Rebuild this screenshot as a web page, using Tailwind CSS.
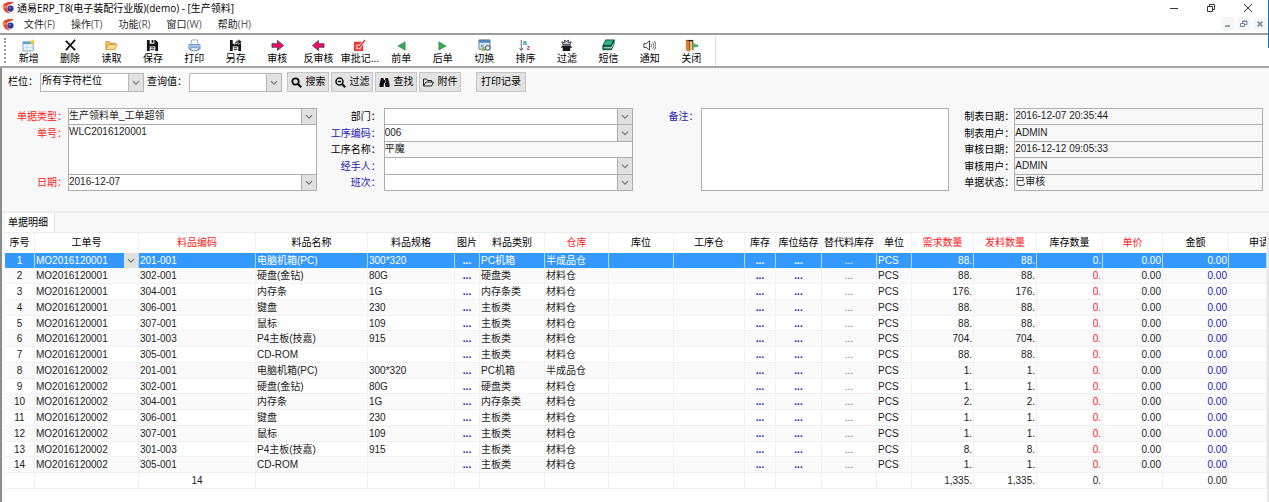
<!DOCTYPE html>
<html lang="zh-CN">
<head>
  <meta charset="UTF-8" />
  <meta name="viewport" content="width=device-width, initial-scale=1.0" />
  <title>通易ERP_T8</title>
  <script src="https://cdn.jsdelivr.net/npm/@tailwindcss/browser@4"></script>
</head>
<body class="bg-white min-h-screen overflow-hidden flex flex-col text-[10px] leading-[14px] text-[#1c1c1c] font-['Liberation_Sans','Noto_Sans_CJK_SC',sans-serif]">

  <!-- 公用图标 -->
  <svg class="hidden">
    <symbol id="chev" viewBox="0 0 16 16"><path d="M4.5 6.5 8 10l3.500-3.500" fill="none" stroke="#777" stroke-width="1.400" /></symbol>
    <symbol id="logo" viewBox="0 0 12 12">
      <path d="M1 5C1 2 4 .5 11 1 9.500 2.500 8 3 6.500 3.400 4.500 4 3.800 6 5 8.500 5.500 9.800 6.500 10.600 8 11.300 4 11.500 1 9 1 5Z" fill="#e8402a" />
      <path d="M0 5.500C1 4.500 3 4 4.500 4.200L3 7Z" fill="#f58b4c" />
      <circle cx="7.800" cy="7" r="2.900" fill="#33349a" />
      <circle cx="7.200" cy="6.300" r="1" fill="#7a7bd0" />
    </symbol>
  </svg>

  <!-- 标题栏 -->
  <header class="font-['Open_Sans','Noto_Sans_CJK_SC',sans-serif]">
    <div class="flex items-center h-[15px] pl-[2px] pr-4">
      <svg class="size-[13px] shrink-0"><use href="#logo" /></svg>
      <h1 class="ml-[2px] text-black">通易ERP_T8(电子装配行业版)(demo) - [生产领料]</h1>
      <div class="ml-auto flex items-center gap-[27px] text-[#333]">
        <button aria-label="最小化"><svg class="size-[10px]" viewBox="0 0 10 10" fill="none" stroke="currentColor"><path d="M1 5.500h8" /></svg></button>
        <button aria-label="还原"><svg class="size-[10px]" viewBox="0 0 10 10" fill="none" stroke="currentColor"><path d="M1.500 3.500h5v5h-5zM3.500 3V1.500h5v5H7" /></svg></button>
        <button aria-label="关闭"><svg class="size-[10px]" viewBox="0 0 10 10" fill="none" stroke="currentColor"><path d="M1 1l8 8M9 1L1 9" /></svg></button>
      </div>
    </div>
    <nav class="flex items-center h-[18px] pl-[2px] pr-[2px]">
      <svg class="size-[13px] shrink-0 mr-[9px]"><use href="#logo" /></svg>
      <div class="flex gap-4">
        <button>文件<span class="text-[#555]">(F)</span></button>
        <button>操作<span class="text-[#555]">(T)</span></button>
        <button>功能<span class="text-[#555]">(R)</span></button>
        <button>窗口<span class="text-[#555]">(W)</span></button>
        <button>帮助<span class="text-[#555]">(H)</span></button>
      </div>
      <div class="ml-auto flex gap-[2px] text-[#7386a0]">
        <button aria-label="最小化窗口" class="bg-[#f6f6f6] p-[3px]"><svg class="size-2" viewBox="0 0 8 8" fill="none" stroke="currentColor" stroke-width="1.500"><path d="M1 6h5" /></svg></button>
        <button aria-label="还原窗口" class="bg-[#f6f6f6] p-[3px]"><svg class="size-2" viewBox="0 0 8 8" fill="none" stroke="currentColor"><path d="M.5 3.500h4v3h-4zM2.500 3V1h4.500v3.500H5M2.500 1.500H7" /></svg></button>
        <button aria-label="关闭窗口" class="bg-[#f6f6f6] p-[3px]"><svg class="size-2" viewBox="0 0 8 8" fill="none" stroke="currentColor" stroke-width="1.700"><path d="M1.500 1.500l5 5M6.500 1.500l-5 5" /></svg></button>
      </div>
    </nav>
  </header>
  <div class="absolute right-0 top-0 w-px h-12 bg-[#1673c4]"></div>

  <!-- 工具栏 -->
  <div class="border-y-2 border-[#9c9c9c] border-b-[#a5a5a5] flex">
    <div class="flex flex-1 max-w-[716px] border-r border-[#ddd] pl-1 pr-[3px] h-[31px]">
      <div class="w-1 my-[3px] border-l-2 border-dotted border-[#999]"></div>
      <div id="toolbar" class="flex flex-1"></div>
    </div>
  </div>

  <main class="flex-1 flex flex-col border-l-2 border-[#8c8c8c] bg-[#f8f8f8]">

    <!-- 查询条件 -->
    <div class="flex items-center pl-[6px] pt-1 text-black">
      <label for="lanwei" class="w-8">栏位：</label>
      <div class="grid w-[104px] h-[19px] border border-[#b5b5b5] bg-white">
        <select id="lanwei" class="[grid-area:1/1] appearance-none min-w-0 pl-[1px] pr-4 pb-[2px] outline-none"><option>所有字符栏位</option></select>
        <svg class="[grid-area:1/1] justify-self-end h-full w-[15px] bg-[#e1e1e1] border-l border-[#b5b5b5] pointer-events-none"><use href="#chev" /></svg>
      </div>
      <label for="chaxun" class="ml-[3px] w-[42px]">查询值：</label>
      <div class="grid w-[93px] h-[19px] border border-[#b5b5b5] bg-white">
        <select id="chaxun" class="[grid-area:1/1] appearance-none min-w-0 pl-[1px] pr-4 outline-none"><option></option></select>
        <svg class="[grid-area:1/1] justify-self-end h-full w-[15px] bg-[#e1e1e1] border-l border-[#b5b5b5] pointer-events-none"><use href="#chev" /></svg>
      </div>
      <div class="flex gap-[2px] ml-[5px]">
        <button class="flex items-center justify-center gap-1 w-[42px] h-5 bg-[#e3e3e3] border border-[#c4c4c4]">
          <svg class="size-[11px]" viewBox="0 0 11 11" fill="none" stroke="#111" stroke-width="1.800"><circle cx="4.500" cy="4.500" r="3.200" /><path d="M7 7l3.200 3.200" stroke-width="2.200" /></svg>搜索</button>
        <button class="flex items-center justify-center gap-1 w-[42px] h-5 bg-[#e3e3e3] border border-[#c4c4c4]">
          <svg class="size-[11px]" viewBox="0 0 11 11" fill="none" stroke="#111" stroke-width="1.500"><circle cx="4.500" cy="4.500" r="3.500" /><path d="M7 7l3.200 3.200" stroke-width="2.200" /><path d="M2.800 4.500h3.400" /></svg>过滤</button>
        <button class="flex items-center justify-center gap-1 w-[42px] h-5 bg-[#e3e3e3] border border-[#c4c4c4]">
          <svg class="size-[11px]" viewBox="0 0 11 11" fill="#111"><path d="M2 1h2.500v1.200H5v4.300l-.5 3.500H.5V7zM9 1H6.500v1.200H6v4.300l.5 3.500h4V7zM4.500 3h2v3h-2z" /></svg>查找</button>
        <button class="flex items-center justify-center gap-1 w-[42px] h-5 bg-[#e3e3e3] border border-[#c4c4c4]">
          <svg class="size-[11px]" viewBox="0 0 11 11" fill="none" stroke="#222"><path d="M.5 9V2h3l1 1.500h4V5M.5 9l2.500-4h7.500L8.500 9z" stroke-linejoin="round" /></svg>附件</button>
      </div>
      <button class="ml-[15px] w-[50px] h-5 bg-[#e3e3e3] border border-[#c4c4c4]">打印记录</button>
    </div>

    <!-- 单据表头 -->
    <div class="grid grid-cols-[66px_1fr_67px_1fr_68px_1fr_65px_1fr] pt-4 pb-5 pr-[6px] text-black">
      <div class="grid grid-rows-[17px_17px_16px_17px_16px] justify-items-end items-center pr-[1px] text-[#ff2020]">
        <label for="leixing">单据类型：</label>
        <label for="danhao">单号：</label>
        <label for="riqi" class="row-start-5">日期：</label>
      </div>
      <div class="grid grid-rows-[16px_50px_16px] border-t border-[#adadad]" data-fields="left"></div>

      <div class="grid grid-rows-[17px_17px_16px_17px_16px] justify-items-end items-center pr-[3px]">
        <label for="bumen">部门：</label>
        <label for="gxbm" class="text-[#1c1cb4]">工序编码：</label>
        <label for="gxmc">工序名称：</label>
        <label for="jingshou" class="text-[#1c1cb4]">经手人：</label>
        <label for="banci" class="text-[#1c1cb4]">班次：</label>
      </div>
      <div class="grid grid-rows-[16px_17px_16px_17px_16px] border-t border-[#adadad]" data-fields="middle"></div>

      <div class="text-right pr-[2px] pt-[2px] text-[#1c1cb4]"><label for="beizhu">备注：</label></div>
      <textarea id="beizhu" class="resize-none border border-[#adadad] bg-white outline-none"></textarea>

      <div class="grid grid-rows-[17px_17px_16px_17px_16px] justify-items-end items-center">
        <label for="zbrq">制表日期：</label>
        <label for="zbyh">制表用户：</label>
        <label for="shrq">审核日期：</label>
        <label for="shyh">审核用户：</label>
        <label for="djzt">单据状态：</label>
      </div>
      <div class="grid grid-rows-[16px_17px_16px_17px_16px] border-t border-[#adadad]" data-fields="right"></div>
    </div>

    <!-- 明细 -->
    <div class="flex-1 flex flex-col pl-[3px] border-t-2 border-[#eeeeee]">
      <div class="flex border-b border-[#ececec]">
        <button class="h-[19px] pl-[3px] pr-[6px] bg-white border-r border-[#e4e4e4] text-black">单据明细</button>
      </div>
      <div class="flex-1 bg-white overflow-hidden border-r-2 border-[#e8e8e8]">
        <table class="table-fixed w-full border-separate border-spacing-0 whitespace-nowrap">
          <thead><tr id="cabecera" class="h-5 text-black"></tr></thead>
          <tbody id="detalle"></tbody>
          <tfoot><tr id="totales" class="h-4"></tr></tfoot>
        </table>
      </div>
    </div>
  </main>

  <script>
    // ---- 工具栏 ----
    const floppy = '<path d="M1 1h3v4h5V1h1l3 2.500V13H1z" fill="#151515"/><path d="M4 8h6v5H4z" fill="#fff"/><path d="M5 9.500h4M5 11.500h4" stroke="#151515"/>';
    const tools = [
      ["新增", '<path d="M1 3h11v10H1z" fill="#eaf4fb" stroke="#7aa7c7"/><path d="M1 3h11v2.500H1z" fill="#5aa5dc"/><path d="M5 6v6M1 9h11" stroke="#c4dcec"/><path d="M11 0l1 2 2 .5-1.500 1.500.3 2L11 5l-2 1 .4-2L8 2.500 10 2z" fill="#f7c52b"/>'],
      ["删除", '<path d="M2 2l10 10M12 1L2 12" stroke="#111" stroke-width="1.900" fill="none"/>'],
      ["读取", '<path d="M1 11V3h4l1 1.500h5V6" fill="#f4c766" stroke="#c98a2d"/><path d="M1 11.500L3.500 6H13l-2.500 5.500z" fill="#fbdc8f" stroke="#d2953a"/>'],
      ["保存", floppy + '<path d="M6 1h2v3H6z" fill="#151515"/>'],
      ["打印", '<path d="M4 1h6l1 5H3z" fill="#fff" stroke="#8aa9cf"/><path d="M1 6h12v5H1z" fill="#a9c8ec" stroke="#6f94c4"/><path d="M3 9h8v3.500H3z" fill="#dce9f8" stroke="#6f94c4"/>'],
      ["另存", floppy + '<path d="M6 6c0-3 2-4 4-4V0l4 3-4 3V4C8 4 7 5 6 6z" fill="#151515" stroke="#fff" stroke-width=".6"/>'],
      ["审核", '<path d="M1 5h6V1.500L13.500 7 7 12.500V9H1z" fill="#f20d6c" stroke="#222" stroke-width=".7"/>'],
      ["反审核", '<path d="M13 5H7V1.500L.5 7 7 12.500V9h6z" fill="#f20d6c" stroke="#222" stroke-width=".7"/>'],
      ["审批记...", '<path d="M1 3h10v10H1z" fill="#e93a3a"/><path d="M3.500 6.500h5v4h-5z" fill="none" stroke="#ffb4a8"/><path d="M5 7.500l1.500 1.500 6.500-8" stroke="#fff" stroke-width="2.600" fill="none"/><path d="M5 7.500l1.500 1.500 6.500-8" stroke="#c73227" stroke-width="1.500" fill="none"/>'],
      ["前单", '<path d="M11 3v9L3 7.500z" fill="#3aa655" stroke="#2b8c45" stroke-width=".6"/>'],
      ["后单", '<path d="M3 3v9l8-4.500z" fill="#3aa655" stroke="#2b8c45" stroke-width=".6"/>'],
      ["切换", '<path d="M1 1h12v10H1z" fill="#dbe8f2" stroke="#5e7d98"/><path d="M1 1h12v3H1z" fill="#4c86bb"/><path d="M3 6h3v3H3z" fill="#8aa9c2"/><circle cx="6" cy="11" r="2.300" fill="#8ebd5a"/><circle cx="10.500" cy="9.500" r="2.400" fill="#fff" stroke="#64768a" stroke-width="1.400"/>'],
      ["排序", '<path d="M2.500 1v11M.5 9.500l2 3 2-3" stroke="#666" fill="none"/><text x="4" y="6" font-size="8" font-weight="bold" fill="#2b9c9c">a</text><text x="8" y="12" font-size="8" font-weight="bold" fill="#b03fa6">z</text>'],
      ["过滤", '<path d="M2 7h10v1.500h-1V13H3V8.500H2z" fill="#151515"/><path d="M3 6L2 3l3 1V1l2 2 2-2v3l3-1-1 3z" fill="#c9cbe6" stroke="#222" stroke-width=".9"/><path d="M1 9h2M11 9h2" stroke="#222"/>'],
      ["短信", '<path d="M4 1h9l-3 6H1z" fill="#30b38a" stroke="#0c5140"/><path d="M1 7v4.500h9L13 6V1l-3 6z" fill="#14705a" stroke="#0c3f34"/><path d="M2 9.500h8l3-5" stroke="#d5f5ea" fill="none"/>'],
      ["通知", '<path d="M1 5h2.500L7 2v10L3.500 9H1z" fill="#fff" stroke="#333"/><path d="M8.500 5c1 1.200 1 2.800 0 4M10.300 3.500c2 2 2 5 0 7M12 2c2.500 3 2.500 7 0 10" stroke="#444" fill="none" stroke-width=".9"/>'],
      ["关闭", '<path d="M1 1h8v11H1z" fill="#222"/><path d="M1 1l4 1.500V14l-4-2z" fill="#d8802f"/><path d="M5.500 2.500H8V12H5.500z" fill="#f4d08a"/><path d="M8.500 7L11 4v2h3v2.500h-3V10z" fill="#45b34c"/>']
    ];
    document.getElementById("toolbar").innerHTML = tools.map(([name, icon]) => `
      <button class="flex-1 basis-0 min-w-0 flex flex-col items-center pt-1 text-black whitespace-nowrap">
        <svg class="size-[13px] shrink-0" viewBox="0 0 14 14">${icon}</svg>
        <span>${name}</span>
      </button>`).join("");

    // ---- 表头字段 ----
    const combo = (id, value) => `
      <div class="grid border-x border-b border-[#adadad] bg-white">
        <select id="${id}" class="[grid-area:1/1] appearance-none min-w-0 pr-4 pb-[2px] leading-[13px] text-[#1c1c1c] outline-none"><option>${value}</option></select>
        <svg class="[grid-area:1/1] justify-self-end h-full w-[15px] bg-[#e1e1e1] border-l border-[#adadad] pointer-events-none"><use href="#chev"/></svg>
      </div>`;
    const lectura = (id, value) => `
      <input id="${id}" value="${value}" readonly class="min-w-0 w-full border-x border-b border-[#adadad] pb-[2px] leading-[13px] text-[#1c1c1c] outline-none" />`;

    const fields = {
      left: combo("leixing", "生产领料单_工单超领")
        + '<textarea id="danhao" class="resize-none border-x border-b border-[#adadad] bg-white text-[#1c1c1c] outline-none">WLC2016120001</textarea>'
        + combo("riqi", "2016-12-07"),
      middle: combo("bumen", "") + combo("gxbm", "006") + lectura("gxmc", "平魔") + combo("jingshou", "") + combo("banci", ""),
      right: lectura("zbrq", "2016-12-07 20:35:44") + lectura("zbyh", "ADMIN") + lectura("shrq", "2016-12-12 09:05:33")
        + lectura("shyh", "ADMIN") + lectura("djzt", "已审核")
    };
    document.querySelectorAll("[data-fields]").forEach(el => { el.innerHTML = fields[el.dataset.fields]; });

    // ---- 明细表 ----
    const RED = "text-[#ff2020]", BLUE = "text-[#1c1cb4]";
    const cols = [
      ["序号", 30], ["工单号", 104], ["料品编码", 117, RED], ["料品名称", 112], ["料品规格", 87], ["图片", 25],
      ["料品类别", 65], ["仓库", 64, RED], ["库位", 65], ["工序仓", 71], ["库存", 31], ["库位结存", 46],
      ["替代料库存", 55], ["单位", 35], ["需求数量", 62, RED], ["发料数量", 63, RED], ["库存数量", 66],
      ["单价", 60, RED], ["金额", 66], ["申请", 0]
    ];
    document.getElementById("cabecera").innerHTML = cols.map(([name, w, color]) =>
      `<th class="p-0 font-normal border-r border-[#f3f3f3] ${w ? "" : "text-left pl-5 overflow-hidden"} ${color || ""}" style="${w ? `width:${w}px` : ""}">${name}</th>`).join("");

    const items = [
      ["201-001", "电脑机箱(PC)", "300*320", "PC机箱", "半成品仓"],
      ["302-001", "硬盘(金钻)", "80G", "硬盘类", "材料仓"],
      ["304-001", "内存条", "1G", "内存条类", "材料仓"],
      ["306-001", "键盘", "230", "主板类", "材料仓"],
      ["307-001", "鼠标", "109", "主板类", "材料仓"],
      ["301-003", "P4主板(技嘉)", "915", "主板类", "材料仓"],
      ["305-001", "CD-ROM", "", "主板类", "材料仓"]
    ];
    const orders = [
      ["MO2016120001", [88, 88, 176, 88, 88, 704, 88]],
      ["MO2016120002", [1, 1, 2, 1, 1, 8, 1]]
    ];

    let n = 0, html = "";
    orders.forEach(([order, qty]) => items.forEach((it, i) => {
      const sel = n++ === 0;
      const td = (content, cls = "") => `<td class="py-0 border-r leading-[13px] overflow-hidden ${sel ? "border-[#b5d9ff]" : "border-b border-[#f1f1f1]"} ${cls || "px-0"}">${content}</td>`;
      const blue = sel ? "" : BLUE, red = sel ? "" : RED;
      const more = `<button class="block mx-auto leading-[13px] font-bold ${blue}" aria-label="查看">...</button>`;
      const orderCell = sel
        ? `<div class="grid"><select aria-label="工单号" class="[grid-area:1/1] appearance-none min-w-0 h-[15px] pl-[1px] outline-none"><option>${order}</option></select><svg class="[grid-area:1/1] justify-self-end h-[15px] w-[14px] bg-[#e1e1e1] pointer-events-none"><use href="#chev"/></svg></div>`
        : order;
      html += `<tr class="${sel ? "bg-[#3399ff] text-white" : n % 2 ? "bg-white" : "bg-[#fafafa]"} h-4 [&:nth-child(4n+1)]:h-[15px]">`
        + td(n, "text-center")
        + td(orderCell, sel ? "" : "pl-[1px]")
        + td(it[0], "pl-[1px]") + td(it[1], "pl-[1px]") + td(it[2], "pl-[1px]")
        + td(more) + td(it[3], "pl-[1px]") + td(it[4], "pl-[1px]")
        + td("") + td("") + td(more) + td(more)
        + td(`<button class="block mx-auto leading-[13px] ${sel ? "" : "text-[#666]"}" aria-label="查看">...</button>`)
        + td("PCS", "pl-[1px]")
        + td(qty[i] + ".", "text-right pr-[1px]") + td(qty[i] + ".", "text-right pr-[1px]")
        + td("0.", "text-right pr-[1px] " + red) + td("0.00", "text-right pr-[1px]") + td("0.00", "text-right pr-[1px] " + blue) + td("")
        + "</tr>";
    }));
    document.getElementById("detalle").innerHTML = html;

    const totals = { 2: "14", 14: "1,335.", 15: "1,335.", 16: "0.", 18: "0.00" };
    document.getElementById("totales").innerHTML = cols.map((c, i) =>
      `<td class="py-0 border-r border-b border-[#f1f1f1] leading-[13px] ${i === 2 ? "text-center" : "text-right pr-[1px]"}">${totals[i] || ""}</td>`).join("");
  </script>
</body>
</html>
